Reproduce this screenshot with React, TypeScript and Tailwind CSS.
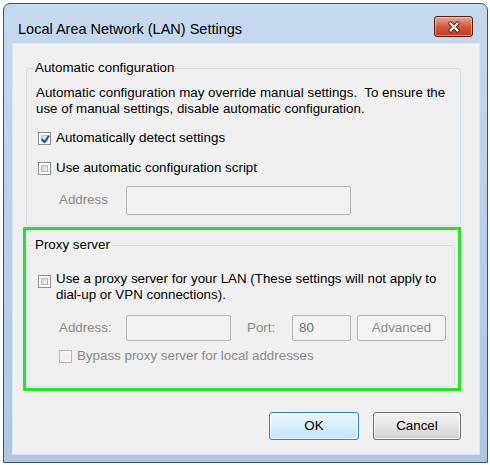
const sans = "font-['Liberation_Sans',Arial,sans-serif]";

function CheckBox({ checked = false, disabled = false }: { checked?: boolean; disabled?: boolean }) {
  if (checked) {
    return (
      <span className="relative box-border flex h-[13px] w-[13px] shrink-0 border border-[#8e8f8f] bg-white p-[2px]">
        <span className="flex-1 border border-[#b4c4dc] bg-gradient-to-br from-[#c9d7ec] to-[#f1f5fb]" />
        <svg className="absolute left-[1px] top-[1px]" width="11" height="11" viewBox="0 0 11 11">
          <path d="M2.2 5.6 L4.4 8.2 L8.8 2.2" fill="none" stroke="#2f4e8f" strokeWidth="2" strokeLinecap="round" strokeLinejoin="round" />
        </svg>
      </span>
    );
  }
  if (disabled) {
    return (
      <span className="box-border flex h-[13px] w-[13px] shrink-0 border border-[#b7b7b7] bg-[#f6f6f6] p-[2px]">
        <span className="flex-1 bg-[#f1f1f1]" />
      </span>
    );
  }
  return (
    <span className="box-border flex h-[13px] w-[13px] shrink-0 border border-[#8e8f8f] bg-white p-[2px]">
      <span className="flex-1 border border-[#b2b6bc] bg-gradient-to-br from-[#cfd2d6] to-[#f7f7f7]" />
    </span>
  );
}

export default function App() {
  return (
    <div className={`h-[465px] w-[490px] bg-white pl-[3px] pt-[3px] text-[13.35px] text-black ${sans}`}>
      {/* Window frame */}
      <div className="flex h-[460px] w-[485px] flex-col rounded-t-[7px] border border-[#45536a] bg-gradient-to-b from-[#c6d9ee] via-[#b9d0ea] to-[#abc6e6]">
        {/* Title bar */}
        <div className="flex h-[39px] items-start justify-between pl-[14px] pr-[14px] pt-[12px]">
          <span className="mt-[3px] text-[14.5px] leading-[20px] text-black">Local Area Network (LAN) Settings</span>
          <button
            type="button"
            className="flex h-[21px] w-[39px] items-center justify-center rounded-[3px] border border-[#5e1d12] bg-gradient-to-b from-[#e6a898] via-[#d45a42] to-[#bf3a20] shadow-[inset_0_0_0_1px_rgba(255,230,220,0.45)]"
          >
            <svg width="14" height="12" viewBox="0 0 14 12">
              <path d="M3.5 2.5 L10.5 9.5 M10.5 2.5 L3.5 9.5" stroke="#5a2015" strokeWidth="4.2" strokeLinecap="round" />
              <path d="M3.5 2.5 L10.5 9.5 M10.5 2.5 L3.5 9.5" stroke="#ffffff" strokeWidth="2.3" strokeLinecap="round" />
            </svg>
          </button>
        </div>

        {/* Client area */}
        <div className="mb-[7px] ml-[8px] mr-[7px] flex flex-1 flex-col border border-[#dce6f2] bg-[#f0f0f0]">
          {/* Automatic configuration */}
          <fieldset className="ml-[13px] mr-[18px] mt-[16px] rounded-[3px] border border-[#d5dfe5] pb-[10px] pl-[9px] pr-2">
            <legend className="-ml-[2px] px-[1px] leading-[16px]">Automatic configuration</legend>
            <p className="mt-[9px] whitespace-nowrap leading-[16px]">
              Automatic configuration may override manual settings.&nbsp; To ensure the
              <br />
              use of manual settings, disable automatic configuration.
            </p>
            <label className="mt-[13px] flex h-[16px] items-center gap-[5px] pl-[2px]">
              <CheckBox checked />
              <span>Automatically detect settings</span>
            </label>
            <label className="mt-[14px] flex h-[16px] items-center gap-[5px] pl-[2px]">
              <CheckBox />
              <span>Use automatic configuration script</span>
            </label>
            <div className="mt-[10px] flex h-[29px] items-center pl-[23px]">
              <span className="w-[67px] text-[#8a8a8a]">Address</span>
              <div className="h-[29px] w-[225px] rounded-[2px] border border-[#b3b8be] bg-[#f3f3f3]" />
            </div>
          </fieldset>

          {/* Proxy server (highlighted) */}
          <div className="ml-[10px] mr-[18px] mt-[1px] border-[3px] border-[#25e325]">
            <fieldset className="mb-[1px] mr-[3px] mt-[7px] rounded-[3px] border border-[#d5dfe5] pb-[22px] pl-[11px]">
              <legend className="-ml-[4px] px-[1px] leading-[16px]">Proxy server</legend>
              <label className="mt-[18px] flex items-start gap-[5px]">
                <span className="mt-[4px]">
                  <CheckBox />
                </span>
                <span className="whitespace-nowrap leading-[16px]">
                  Use a proxy server for your LAN (These settings will not apply to
                  <br />
                  dial-up or VPN connections).
                </span>
              </label>
              <div className="mt-[12px] flex h-[26px] items-center pl-[21px] text-[#8a8a8a]">
                <span className="w-[67px]">Address:</span>
                <div className="h-[26px] w-[105px] rounded-[2px] border border-[#b3b8be] bg-[#f3f3f3]" />
                <span className="ml-[16px] w-[45px]">Port:</span>
                <div className="flex h-[26px] w-[59px] items-center rounded-[2px] border border-[#b3b8be] bg-[#f3f3f3] pl-[6px] text-[#6b6b6b]">
                  80
                </div>
                <button
                  type="button"
                  className="ml-[6px] h-[26px] w-[89px] rounded-[3px] border border-[#b0b5b9] bg-[#f4f4f4] text-[#8a8a8a]"
                >
                  Advanced
                </button>
              </div>
              <label className="mt-[7px] flex h-[16px] items-center gap-[5px] pl-[21px] text-[#8a8a8a]">
                <CheckBox disabled />
                <span>Bypass proxy server for local addresses</span>
              </label>
            </fieldset>
          </div>

          {/* Buttons */}
          <div className="mr-[18px] mt-[21px] flex justify-end gap-[14px]">
            <button
              type="button"
              className="h-[28px] w-[90px] rounded-[3px] border border-[#3c7fb1] bg-gradient-to-b from-[#eaf6fd] via-[#d9f0fc] to-[#bee6fd] text-black shadow-[inset_0_0_0_1px_rgba(255,255,255,0.7)]"
            >
              OK
            </button>
            <button
              type="button"
              className="h-[28px] w-[88px] rounded-[3px] border border-[#707070] bg-gradient-to-b from-[#f2f2f2] via-[#e6e6e6] to-[#d0d0d0] text-black shadow-[inset_0_0_0_1px_rgba(255,255,255,0.7)]"
            >
              Cancel
            </button>
          </div>
        </div>
      </div>
    </div>
  );
}
